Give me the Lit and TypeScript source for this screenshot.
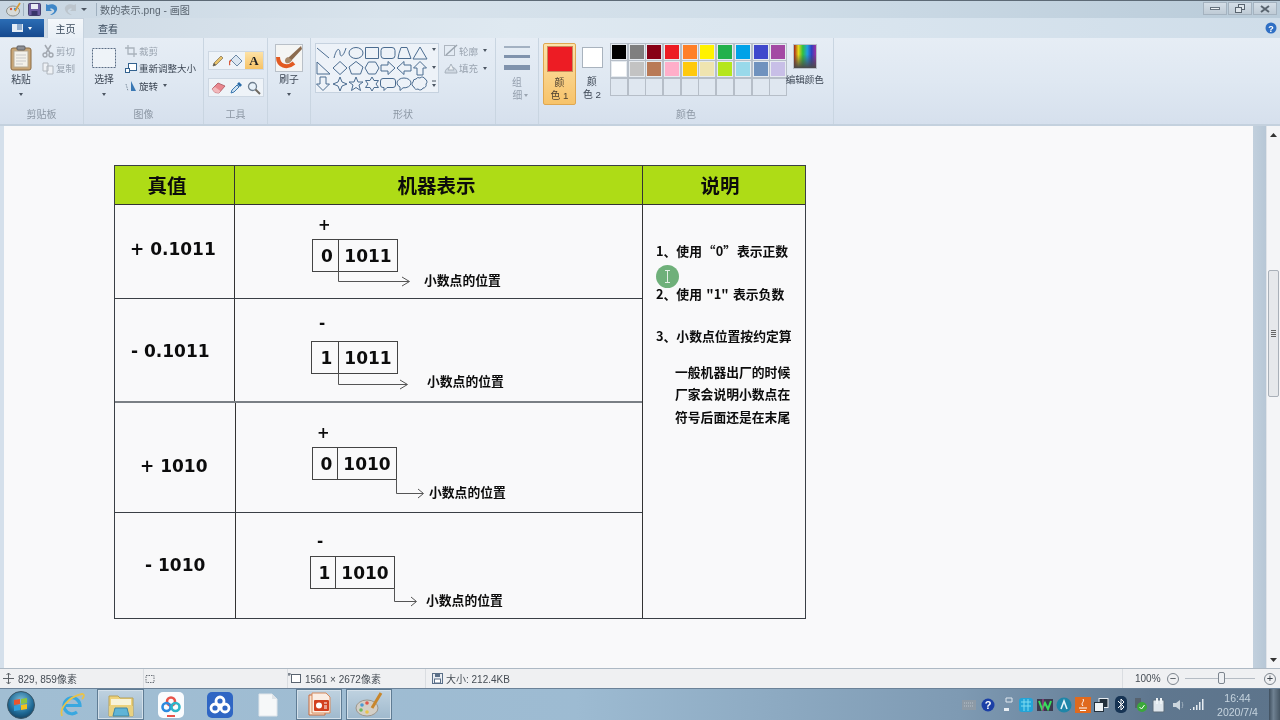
import { LitElement, html, css, svg } from "lit";
import { customElement } from "lit/decorators.js";

const SW1 = ["#000000","#7f7f7f","#880015","#ed1c24","#ff7f27","#fff200","#22b14c","#00a2e8","#3f48cc","#a349a4"];
const SW2 = ["#ffffff","#c3c3c3","#b97a57","#ffaec9","#ffc90e","#efe4b0","#b5e61d","#99d9ea","#7092be","#c8bfe7"];

const SHAPES = [
  ["M-6-5L6 5","M-6 5C-3-7 0-4 0 0S3 5 6-5","M-7 0a7 5.5 0 1 0 14 0a7 5.5 0 1 0-14 0Z","M-6.5-5.5h13v11h-13Z","M-4-5.5h8a3 3 0 0 1 3 3v5a3 3 0 0 1-3 3h-8a3 3 0 0 1-3-3v-5a3 3 0 0 1 3-3Z","M-3-5.5h6l4 11h-13l1-5Z","M0-6L7 6H-7Z"],
  ["M-6-6L7 6H-6Z","M0-6.5L7 0L0 6.5L-7 0Z","M0-6.5L7-1L4.5 6H-4.5L-7-1Z","M-3.5-6H3.5L7 0L3.5 6H-3.5L-7 0Z","M-7-3H0V-6.5L7 0L0 6.5V3H-7Z","M7-3H0V-6.5L-7 0L0 6.5V3H7Z","M-3 7V0H-6.5L0-6.5L6.5 0H3V7Z"],
  ["M-3-7V0H-6.5L0 6.5L6.5 0H3V-7Z","M0-7L2 -2L7 0L2 2L0 7L-2 2L-7 0L-2-2Z","M0-7L2-2H7L3 1L4.5 6.5L0 3.5L-4.5 6.5L-3 1L-7-2H-2Z","M0-7L2-3.5H6.5L4 0L6.5 3.5H2L0 7L-2 3.5H-6.5L-4 0L-6.5-3.5H-2Z","M-5-5.5H5a2.500 2.500 0 0 1 2.500 2.500V1a2.500 2.500 0 0 1-2.500 2.500H-1L-4 6.500V3.500H-5A2.500 2.500 0 0 1-7.500 1V-3A2.500 2.500 0 0 1-5-5.500Z","M-7-1a7 5 0 1 1 14 0a7 5 0 0 1-8 4.800L-4 6.500V3A7 5 0 0 1-7-1Z","M-4-5a3 3 0 0 1 4-1a3 3 0 0 1 5 1a3 3 0 0 1 1 5a3 3 0 0 1-3 4a3 3 0 0 1-5 1a3 3 0 0 1-4-2a3 3 0 0 1-1-5a3 3 0 0 1 3-3Z"],
];
const SX = [8,25,41,57,73,89,105];
const SY = [10,25,41];

const I = {
  clip: html`<svg width="22" height="26" viewBox="0 0 22 26"><rect x="1" y="3" width="20" height="22" rx="2" fill="#c9a676" stroke="#8a6a42"/><rect x="4" y="6" width="14" height="16" fill="#f3f1ea" stroke="#b7aa93"/><path d="M6 10h10M6 13h10M6 16h10M6 19h7" stroke="#c9c9c9"/><rect x="7" y="1" width="8" height="4" rx="1" fill="#8d8f94" stroke="#5e6066"/></svg>`,
  cut: html`<svg width="12" height="14" viewBox="0 0 12 14"><path d="M3 1l5 8M9 1L4 9" stroke="#a2a8b0" stroke-width="1.500"/><circle cx="3" cy="11" r="2" fill="none" stroke="#a2a8b0" stroke-width="1.400"/><circle cx="9" cy="11" r="2" fill="none" stroke="#a2a8b0" stroke-width="1.400"/></svg>`,
  copy: html`<svg width="12" height="14" viewBox="0 0 12 14"><path d="M1 2h5v8H1ZM5 5h6v8H5Z" fill="#eef1f5" stroke="#b0b6bd"/></svg>`,
  sel: html`<svg width="26" height="26" viewBox="0 0 26 26"><rect x="1.500" y="3.500" width="23" height="19" fill="#eef3f8" stroke="#5b6d85" stroke-dasharray="2 1"/></svg>`,
  crop: html`<svg width="12" height="12" viewBox="0 0 12 12"><path d="M3 0v9h9M0 3h9v9" fill="none" stroke="#a9b2bc" stroke-width="1.300"/></svg>`,
  resize: html`<svg width="12" height="12" viewBox="0 0 12 12"><rect x="3.500" y="1.500" width="8" height="7" fill="#fff" stroke="#33628f"/><rect x="0.500" y="6.500" width="4" height="4" fill="#fff" stroke="#33628f"/></svg>`,
  rotate: html`<svg width="12" height="12" viewBox="0 0 12 12"><path d="M6 1l5 10H6Z" fill="#3a78b4"/><path d="M1 4l2 7" stroke="#7c8c9c" stroke-dasharray="1.500 1"/></svg>`,
  pencil: html`<svg width="14" height="14" viewBox="0 0 14 14"><path d="M2 12l1-3 7-7 2 2-7 7Z" fill="#e8c26a" stroke="#8a7a5a" stroke-width=".8"/><path d="M2 12l1-3 2 2Z" fill="#555"/></svg>`,
  fill: html`<svg width="15" height="14" viewBox="0 0 15 14"><path d="M7 1l6 6-5 5-6-6Z" fill="#dbe6f1" stroke="#6b88a5"/><path d="M2 6c-2 2-2 4-1 5" fill="none" stroke="#d95a3c" stroke-width="1.500"/></svg>`,
  eraser: html`<svg width="15" height="13" viewBox="0 0 15 13"><path d="M1 8l6-6 7 3-6 7-4-.5Z" fill="#e9868e" stroke="#a8565e" stroke-width=".8"/><path d="M1 8l3 3.500 4 .5 1.500-2L4 6Z" fill="#f2b8bb"/></svg>`,
  dropper: html`<svg width="14" height="14" viewBox="0 0 14 14"><path d="M2 12l1-3 5-5 2 2-5 5Z" fill="#cfe2f2" stroke="#3c79b0"/><path d="M8 3l2-2 3 3-2 2Z" fill="#2a6ca8"/></svg>`,
  mag: html`<svg width="14" height="14" viewBox="0 0 14 14"><circle cx="5.500" cy="5.500" r="4" fill="#e8f2fa" stroke="#6f7f8f" stroke-width="1.300"/><path d="M8.500 8.500L13 13" stroke="#6f6a60" stroke-width="2"/></svg>`,
  brush: html`<svg width="28" height="28" viewBox="0 0 28 28"><rect x=".5" y=".5" width="27" height="27" fill="#f4f5f4" stroke="#b9c0c8"/><path d="M3 13c0 9 9 12 16 6" fill="none" stroke="#e25a22" stroke-width="4"/><path d="M26 2L13 14l3 3L27 5Z" fill="#8a6a4e"/><path d="M13 13c-3 1-4 4-2 6 3 1 5-1 6-3Z" fill="#a8896a"/></svg>`,
  outline: html`<svg width="14" height="13" viewBox="0 0 14 13"><rect x=".5" y="1.500" width="10" height="10" fill="none" stroke="#aeb6c0"/><path d="M2 11L13 1" stroke="#9aa4ae" stroke-width="1.500"/></svg>`,
  bucket: html`<svg width="14" height="13" viewBox="0 0 14 13"><path d="M1 11a6 6 0 0 1 12 0Z" fill="#cfd8e2" stroke="#a8b2bd"/><path d="M7 2l3 6H4Z" fill="#eef2f6" stroke="#a8b2bd"/></svg>`,
  orb: html`<svg width="28" height="28" viewBox="0 0 28 28"><defs><radialGradient id="o" cx=".5" cy=".35" r=".75"><stop offset="0" stop-color="#7fc0dc"/><stop offset=".6" stop-color="#1f6a96"/><stop offset="1" stop-color="#12344e"/></radialGradient></defs><circle cx="14" cy="14" r="13.500" fill="url(#o)" stroke="#3a5566"/><path d="M7 9l6-1v5l-6 1Z" fill="#e8552e"/><path d="M14 8l6-1v5l-6 1Z" fill="#8cc63f"/><path d="M7 15l6-1v5l-6 1Z" fill="#2f9fdc"/><path d="M14 14l6-1v5l-6 1Z" fill="#f4c21b"/></svg>`,
  ie: html`<svg width="28" height="28" viewBox="0 0 28 28"><path d="M7 14.500h15a8 8 0 1 0-3 6.500" fill="none" stroke="#39a8e0" stroke-width="3.200"/><path d="M4 25C1 18 10 6 24 3c3 0 2 3 0 5" fill="none" stroke="#e8c24a" stroke-width="1.800"/></svg>`,
  explorer: html`<svg width="28" height="26" viewBox="0 0 28 26"><path d="M2 4h9l2 2h13v18H2Z" fill="#eed27a" stroke="#b7a158"/><rect x="4" y="7" width="20" height="6" fill="#f8f3d8"/><rect x="2" y="14" width="24" height="10" fill="#e9d180"/><path d="M6 24l2-8h12l2 8Z" fill="#5fb4d6" stroke="#3d86a8"/></svg>`,
  cloudW: html`<svg width="26" height="26" viewBox="0 0 26 26"><rect width="26" height="26" rx="5" fill="#fafcfe"/><g fill="none" stroke-width="2.600"><circle cx="13" cy="9.500" r="4" stroke="#e8534a"/><circle cx="8.500" cy="15" r="4" stroke="#2d8ae0"/><circle cx="17.500" cy="15" r="4" stroke="#2db5c8"/></g><rect x="9" y="23" width="8" height="2" fill="#e8534a"/></svg>`,
  cloudB: html`<svg width="26" height="26" viewBox="0 0 26 26"><rect width="26" height="26" rx="5" fill="#2f66c4"/><g fill="none" stroke="#fff" stroke-width="2.800"><circle cx="13" cy="9" r="4"/><circle cx="8" cy="16" r="4"/><circle cx="18" cy="16" r="4"/></g></svg>`,
  doc: html`<svg width="20" height="24" viewBox="0 0 20 24"><path d="M1 1h13l5 5v17H1Z" fill="#f6f8f9" stroke="#dfe5ea"/><path d="M14 1v5h5" fill="#dfe4e8"/></svg>`,
  ppt: html`<svg width="26" height="26" viewBox="0 0 26 26"><path d="M3 3h16v20H3Z" fill="#f7e3d2" stroke="#c96a3c"/><path d="M6 1h14l4 4v16H6Z" fill="#fbeee4" stroke="#d88a5c"/><rect x="8" y="8" width="15" height="11" rx="1" fill="#d2401e"/><circle cx="13" cy="13.500" r="3" fill="#fff"/><path d="M18 11h3M18 14h3M18 16h3" stroke="#fff"/></svg>`,
  paint: html`<svg width="28" height="26" viewBox="0 0 28 26"><ellipse cx="12" cy="16" rx="11" ry="8" fill="#d3cfc7" stroke="#9c968c"/><circle cx="7" cy="13" r="1.800" fill="#4a9ad4"/><circle cx="12" cy="11" r="1.800" fill="#e0574a"/><circle cx="6" cy="18" r="1.800" fill="#6cba5a"/><circle cx="12" cy="20" r="1.800" fill="#e8c24a"/><path d="M26 1L17 16" stroke="#c8862c" stroke-width="3"/></svg>`,
  pal: html`<svg width="15" height="15" viewBox="0 0 15 15"><ellipse cx="7" cy="9" rx="6.500" ry="5" fill="#d8dbd9" stroke="#8d9290"/><circle cx="5" cy="7" r="1.200" fill="#d9523c"/><circle cx="9" cy="7" r="1.200" fill="#3f8fd0"/><path d="M14 1L9 9" stroke="#d79a36" stroke-width="1.600"/></svg>`,
  save: html`<svg width="13" height="13" viewBox="0 0 13 13"><rect x=".5" y=".5" width="12" height="12" rx="1" fill="#6a5aa0" stroke="#46406e"/><rect x="3" y="1" width="7" height="5" fill="#e8ecf4"/><rect x="3.500" y="8" width="6" height="4.500" fill="#38346a"/></svg>`,
  undo: html`<svg width="14" height="13" viewBox="0 0 14 13"><path d="M3 2c6-2 10 1 9 5-1 3-4 5-7 5 3-2 5-3 4-5-1-1-3-2-4-1l2 2H1V1Z" fill="#3f87c8"/></svg>`,
  redo: html`<svg width="14" height="13" viewBox="0 0 14 13"><path d="M11 2C5 0 1 3 2 7c1 3 4 5 7 5-3-2-5-3-4-5 1-1 3-2 4-1L7 8h6V1Z" fill="#bcc5cd"/></svg>`,
  plus: html`<svg width="11" height="11" viewBox="0 0 11 11"><path d="M5.500 0v11M0 5.500h11M3.500 2L5.500 0l2 2M3.500 9l2 2 2-2" fill="none" stroke="#5c6166"/></svg>`,
  selS: html`<svg width="12" height="12" viewBox="0 0 12 12"><path d="M2 2.500h8v7H2Z" fill="none" stroke="#6a7078" stroke-dasharray="1.500 1"/></svg>`,
  dim: html`<svg width="13" height="12" viewBox="0 0 13 12"><rect x="3.500" y="1.500" width="9" height="8" fill="#fff" stroke="#5a6470"/><path d="M1 0v3M0 1h3" stroke="#5a6470"/></svg>`,
  disk: html`<svg width="11" height="11" viewBox="0 0 11 11"><rect x=".5" y=".5" width="10" height="10" fill="#e8ecf2" stroke="#5a6f88"/><rect x="3" y="1" width="5" height="3" fill="#5a6f88"/><rect x="2.500" y="6" width="6" height="4" fill="#fff" stroke="#5a6f88"/></svg>`,
};

const T = {
  kb: html`<svg width="14" height="10"><rect width="14" height="10" fill="#8d9aa6"/><path d="M2 3h10M2 6h10" stroke="#b8c2cb" stroke-dasharray="1 1"/></svg>`,
  q: html`<svg width="14" height="14"><circle cx="7" cy="7" r="6.500" fill="#1b3fa6"/><text x="7" y="11" text-anchor="middle" font-size="11" font-weight="bold" font-family="Liberation Sans" fill="#fff">?</text></svg>`,
  flag: html`<svg width="12" height="16"><path d="M5 1h6v4H5Z" fill="none" stroke="#dfe7ee"/><path d="M3 11h5v3H3Z" fill="#e8eef3"/></svg>`,
  globe: html`<svg width="16" height="16"><rect x="1" y="1" width="14" height="14" rx="3" fill="#22a4d8"/><path d="M3 5h10M3 9h10M6 2v12M10 2v12" stroke="#7fdcf0"/></svg>`,
  w: html`<svg width="16" height="12"><rect width="16" height="12" fill="#3a3a4e"/><path d="M2 2l3 8 3-6 3 6 3-8" fill="none" stroke="#37e05a" stroke-width="2"/><path d="M6 0v12" stroke="#c23a9a"/></svg>`,
  a: html`<svg width="16" height="16"><circle cx="8" cy="8" r="7.500" fill="#1f86a8"/><path d="M5 12l3-8 3 8" fill="none" stroke="#e4f4fa" stroke-width="1.600"/></svg>`,
  java: html`<svg width="16" height="16"><rect width="16" height="16" fill="#e06a1e"/><path d="M8 2c2 3-3 4 0 7M4 11h8M5 13.500h6" stroke="#fff" fill="none"/></svg>`,
  win: html`<svg width="15" height="14"><rect x="5" y=".5" width="9" height="9" fill="#22303c" stroke="#e8eef3"/><rect x=".5" y="4.500" width="9" height="9" fill="#eef3f6" stroke="#22303c"/></svg>`,
  bt: html`<svg width="12" height="17"><rect width="12" height="17" rx="5" fill="#173454"/><path d="M3 5l6 6-3 3V3l3 3-6 6" fill="none" stroke="#fff"/></svg>`,
  ok: html`<svg width="16" height="16"><rect x="3" y="1" width="6" height="10" fill="#56626e"/><circle cx="10" cy="10" r="5" fill="#3aa83a"/><path d="M7.500 10l2 2 3-4" fill="none" stroke="#fff"/></svg>`,
  plug: html`<svg width="14" height="16"><rect x="1" y="3" width="11" height="12" rx="1" fill="#dfe6ec" stroke="#5c6c7a"/><path d="M5 1v6M9 1v6" stroke="#eef3f6" stroke-width="2"/></svg>`,
  vol: html`<svg width="14" height="14"><path d="M2 5h3l4-3v10L5 9H2Z" fill="#ccd6de"/><path d="M11 4c1 2 1 4 0 6" stroke="#9fb0be" fill="none"/></svg>`,
  net: html`<svg width="15" height="13"><path d="M1 11h1v1H1ZM4 9h1.500v3H4ZM7 7h1.500v5H7ZM10 4h1.500v8H10ZM13 1h1.500v11H13Z" fill="#e6ecf1"/></svg>`,
};
const TRAY = [T.kb,T.q,T.flag,T.globe,T.w,T.a,T.java,T.win,T.bt,T.ok,T.plug,T.vol,T.net];

const TASKS = [
  { ic: I.ie, w: 48, ml: 6, on: false },
  { ic: I.explorer, w: 47, ml: 1, on: true },
  { ic: I.cloudW, w: 48, ml: 3, on: false },
  { ic: I.cloudB, w: 48, ml: 1, on: false },
  { ic: I.doc, w: 48, ml: 0, on: false },
  { ic: I.ppt, w: 46, ml: 4, on: true },
  { ic: I.paint, w: 46, ml: 4, on: true },
];

interface Row { val: string; w: number; h: number; pl: number; pb: number; pt: number; sign: string; sx: number; sy: number; bx: number; by: number; b0: number; b1: number; bit: string; rest: string; arrow: string; ax: number; ay: number; aw: number; ah: number; nx: number; ny: number; line: string; }

const ROWS: Row[] = [
  { val: "+ 0.1011", w: 120, h: 94, pl: 15, pb: 6, pt: 0, sign: "+", sx: 83, sy: 20, bx: 77, by: 34, b0: 26, b1: 58, bit: "0", rest: "1011",
    arrow: "M.5 0V10.500H71M64 6L71.500 10.500L64 15", ax: 103, ay: 66, aw: 74, ah: 18, nx: 189, ny: 67, line: "thin" },
  { val: "- 0.1011", w: 120, h: 104, pl: 16, pb: 0, pt: 1, sign: "-", sx: 84, sy: 24, bx: 76, by: 42, b0: 27, b1: 58, bit: "1", rest: "1011",
    arrow: "M.5 0V11.500H69M62 7L69.500 11.500L62 16", ax: 103, ay: 74, aw: 74, ah: 18, nx: 192, ny: 74, line: "thick" },
  { val: "+ 1010", w: 121, h: 110, pl: 25, pb: 0, pt: 16, sign: "+", sx: 81, sy: 30, bx: 76, by: 44, b0: 25, b1: 58, bit: "0", rest: "1010",
    arrow: "M.5 0V14.500H27M22 10L27.500 14.500L22 19", ax: 160, ay: 76, aw: 30, ah: 22, nx: 193, ny: 81, line: "thin" },
  { val: "- 1010", w: 121, h: 0, pl: 30, pb: 2, pt: 0, sign: "-", sx: 81, sy: 28, bx: 74, by: 43, b0: 25, b1: 58, bit: "1", rest: "1010",
    arrow: "M.5 0V13.500H22M17 9L22.500 13.500L17 18", ax: 158, ay: 75, aw: 26, ah: 22, nx: 190, ny: 79, line: "none" },
];

@customElement("app-root")
export class AppRoot extends LitElement {
  static styles = css`
    :host { display: block; width: 1280px; height: 720px; overflow: hidden; font-family: "Liberation Sans", "Noto Sans CJK SC", sans-serif; font-size: 10px; color: #3c4654; }
    .app { width: 1280px; height: 720px; display: flex; flex-direction: column; filter: blur(0.35px); }
    svg { display: block; flex: none; }

    .title { height: 18px; flex: none; display: flex; align-items: center; box-sizing: border-box; border-top: 1px solid #5d6a76; padding-left: 6px; background: linear-gradient(90deg, #c8d6e2, #d8e3ec 30%, #cfdde8 60%, #b9cbd9); }
    .qsep { width: 1px; height: 13px; background: #9fb0bf; }
    .qa { display: flex; gap: 4px; align-items: center; }
    .ttl { color: #5a6570; font-size: 10.200px; margin-left: 3px; }
    .win { margin-left: auto; display: flex; gap: 1px; margin-right: 3px; align-self: flex-start; margin-top: 1px; }
    .wb { height: 13px; width: 24px; box-sizing: border-box; border: 1px solid #a4b2bf; background: linear-gradient(#d4dee7, #bfcbd6); display: flex; align-items: center; justify-content: center; }

    .tabs { height: 20px; flex: none; display: flex; align-items: flex-end; background: linear-gradient(90deg, #cdd9e4, #dfe9f1 40%, #d8e4ee 70%, #cfdde9); }
    .appbtn { width: 44px; height: 18px; background: linear-gradient(#2b6db5, #16498e); display: flex; align-items: center; justify-content: center; gap: 5px; margin-bottom: 1px; }
    .tab { height: 20px; display: flex; align-items: center; justify-content: center; font-size: 10px; color: #3a4a5c; }
    .tab.on { width: 37px; margin-left: 3px; background: linear-gradient(#f4f7fa, #e8eff6); border: 1px solid #c6d2de; border-bottom: 0; box-sizing: border-box; }
    .tab.off { width: 48px; }
    .help { margin-left: auto; margin-right: 3px; align-self: center; }

    .ribbon { height: 88px; flex: none; box-sizing: border-box; display: flex; background: linear-gradient(#e6edf5, #dfe8f2 50%, #d6e0ed); border-bottom: 2px solid #c4d1de; font-size: 9.800px; }
    .g { display: flex; flex-direction: column; box-sizing: border-box; border-right: 1px solid #c9d5e1; flex: none; }
    .gb { height: 68px; display: flex; flex: none; }
    .gl { text-align: center; color: #8c97a4; font-size: 10px; line-height: 18px; }
    .big { display: flex; flex-direction: column; align-items: center; padding-top: 7px; color: #3c4654; box-sizing: border-box; }
    .big .ic { height: 26px; display: flex; align-items: center; justify-content: center; margin-bottom: 2px; }
    .big .tx { line-height: 14px; }
    .dn { width: 0; height: 0; border: 2.500px solid transparent; border-top: 3px solid #4c5662; border-bottom: 0; }
    .dnw { height: 14px; display: flex; align-items: center; justify-content: center; }
    .smalls { display: flex; flex-direction: column; padding-top: 4px; }
    .sm { height: 17.500px; display: flex; align-items: center; gap: 2px; white-space: nowrap; font-size: 9.500px; }
    .sm .si { width: 12px; display: flex; justify-content: center; }
    .sm.dis { color: #9aa4b0; }
    .tools { display: flex; flex-direction: column; gap: 10px; padding: 14px 0 0 5px; }
    .trow { display: flex; height: 17px; width: 54px; background: #eef3f8; box-shadow: 0 0 0 1px #cdd7e2; }
    .tc { width: 18px; display: flex; align-items: center; justify-content: center; }
    .tc.on { background: linear-gradient(#fde2a6, #f6c265); font: bold 13px "Liberation Serif", serif; color: #222; }
    .gal { margin: 5px 0 0 4px; width: 124px; height: 50px; background: #edf2f8; box-sizing: border-box; border: 1px solid #c6d2df; }
    .lines { display: flex; flex-direction: column; align-items: center; width: 100%; padding-top: 8px; box-sizing: border-box; color: #939eac; }
    .l { width: 26px; background: #8093ad; margin-bottom: 7px; flex: none; }
    .l.a { height: 2px; background: #a3b1c2; }
    .l.b { height: 3px; }
    .l.c { height: 5px; margin-bottom: 6px; }
    .lines .tx { line-height: 13px; display: flex; align-items: center; gap: 2px; }
    .lines .tx.ar2 { margin-right: -7px; }
    .c1 { margin: 5px 0 0 4px; width: 33px; height: 62px; box-sizing: border-box; border: 1px solid #dfa751; border-radius: 2px; background: linear-gradient(#fde3aa, #f7c36a); display: flex; flex-direction: column; align-items: center; color: #4d4030; line-height: 13px; }
    .sq1 { width: 24px; height: 24px; background: #ed1c24; box-shadow: 0 0 0 1px #c78a5c; margin: 3px 0 5px; }
    .c2 { width: 32px; margin-top: 5px; display: flex; flex-direction: column; align-items: center; line-height: 13px; }
    .sq2 { width: 19px; height: 19px; background: #fff; box-shadow: 0 0 0 1px #a9b3be; margin: 5px 0 5px; }
    .pal { display: grid; grid-template-columns: repeat(10, 16px); grid-auto-rows: 16px; gap: 1.400px 1.700px; margin: 6px 0 0 3px; height: 52px; }
    .cell { box-shadow: inset 0 0 0 1px #e6ebf0, 0 0 0 1px #b6bec8; }
    .cell.e { background: #dfe7f0; box-shadow: 0 0 0 1px #b6bec8; }
    .edit { width: 39px; margin: 7px 0 0 -1px; display: flex; flex-direction: column; align-items: center; white-space: nowrap; font-size: 9.500px; }
    .rb { width: 22px; height: 23px; box-shadow: 0 0 0 1px #b8bfc8; background: linear-gradient(90deg, #a0201c, #e8d818, #30c040, #20a0e0, #3040c0, #a030a0); margin-bottom: 4px; position: relative; }
    .rb::after { content: ""; position: absolute; inset: 0; background: linear-gradient(transparent 40%, #4a4a4a); }

    .main { flex: 1; display: flex; min-height: 0; }
    .gut { width: 4px; background: #d5e0eb; }
    .canvas { flex: 1; background: #f9f9fa; padding: 39px 0 0 110px; box-sizing: border-box; }
    .strip { width: 13px; background: linear-gradient(90deg, #c2d0dd, #b7c7d6); }
    .sb { width: 14px; background: #f4f5f7; display: flex; flex-direction: column; align-items: center; box-sizing: border-box; border-left: 1px solid #e0e4e9; }
    .ar { height: 12px; display: flex; align-items: center; justify-content: center; flex: none; }
    .ar.u { margin-top: 3px; }
    .thumb { margin-top: 129px; width: 11px; height: 127px; box-sizing: border-box; border: 1px solid #a9b0b8; border-radius: 2px; background: #e6e8eb; display: flex; flex-direction: column; gap: 1px; align-items: center; justify-content: center; }
    .thumb i { width: 5px; height: 1px; background: #666; }
    .sp { flex: 1; }

    .table { width: 692px; height: 454px; box-sizing: border-box; border: 1px solid #3a3f45; display: flex; flex-direction: column; background: #f9f9fa; color: #0c0c0c; }
    .hd { height: 38px; flex: none; display: flex; background: #aedc16; border-bottom: 1px solid #333; font: bold 19.500px "Noto Sans CJK SC", sans-serif; }
    .hd > div { display: flex; align-items: center; justify-content: center; box-sizing: border-box; line-height: 1; }
    .h1 { width: 120px; border-right: 1px solid #333; padding-right: 15px; }
    .h2 { width: 408px; border-right: 1px solid #333; padding-right: 4px; }
    .h3 { flex: 1; padding-right: 8px; }
    .body { flex: 1; display: flex; min-height: 0; }
    .rows { width: 528px; display: flex; flex-direction: column; flex: none; border-right: 1px solid #333; box-sizing: border-box; }
    .row { display: flex; box-sizing: border-box; flex: none; }
    .row.last { flex: 1; }
    .row.thin { border-bottom: 1px solid #3a3f45; }
    .row.thick { border-bottom: 2px solid #7a7f84; }
    .val { box-sizing: border-box; display: flex; align-items: center; border-right: 1px solid #333; font: bold 17px "DejaVu Sans", sans-serif; white-space: pre; flex: none; }
    .dia { flex: 1; position: relative; }
    .mark { position: absolute; font: bold 15px "DejaVu Sans", sans-serif; line-height: 16px; }
    .reg { position: absolute; height: 33px; display: flex; box-sizing: border-box; border: 1px solid #444; font: bold 17px "DejaVu Sans", sans-serif; }
    .reg .bit { display: flex; align-items: center; justify-content: center; box-sizing: border-box; border-right: 1px solid #444; padding-left: 3px; }
    .reg .rest { display: flex; align-items: center; justify-content: center; box-sizing: border-box; }
    .arr { position: absolute; overflow: visible; }
    .note { position: absolute; font: bold 12.800px "Noto Sans CJK SC", sans-serif; line-height: 16px; white-space: nowrap; }
    .notes { flex: 1; position: relative; padding: 35px 0 0 13px; font: bold 12.800px/22px "Noto Sans CJK SC", sans-serif; white-space: nowrap; box-sizing: border-box; }
    .n1 { word-spacing: -2px; }
    .n2 { margin-top: 21px; word-spacing: 1.500px; }
    .n3 { margin-top: 20px; }
    .sub { margin: 14px 0 0 19px; line-height: 22.300px; }
    .cursor { position: absolute; left: 13px; top: 60px; width: 23px; height: 23px; border-radius: 50%; background: #6fb07a; display: flex; align-items: center; justify-content: center; }

    .status { height: 20px; flex: none; box-sizing: border-box; display: flex; align-items: center; background: #eff0f2; border-top: 1px solid #aeb9c4; color: #454c54; font-size: 10px; }
    .seg { display: flex; align-items: center; height: 100%; box-sizing: border-box; flex: none; gap: 4px; }
    .s1 { width: 144px; padding-left: 3px; border-right: 1px solid #dadde1; }
    .s2 { width: 144px; border-right: 1px solid #dadde1; }
    .s3 { width: 138px; border-right: 1px solid #dadde1; }
    .s4 { padding-left: 6px; gap: 3px; }
    .zoom { margin-left: auto; width: 158px; height: 100%; display: flex; align-items: center; border-left: 1px solid #dadde1; box-sizing: border-box; padding-left: 12px; }
    .track { width: 70px; height: 1px; background: #b5bcc4; position: relative; margin: 0 9px 0 6px; flex: none; }
    .knob { position: absolute; left: 33px; top: -6px; width: 7px; height: 12px; border: 1px solid #7d858e; border-radius: 2px; background: #eef0f3; box-sizing: border-box; }
    .zb { width: 12px; height: 12px; border-radius: 50%; border: 1px solid #7d858e; display: flex; align-items: center; justify-content: center; font-size: 11px; line-height: 1; color: #3c444c; box-sizing: border-box; flex: none; }
    .z100 { width: 32px; color: #454c54; flex: none; }

    .taskbar { height: 32px; flex: none; display: flex; align-items: center; background: linear-gradient(90deg, #a1bed3, #9dbbd2 45%, #7e9ab3 75%, #5f778f 90%, #5d748b); border-top: 1px solid #6b8299; box-sizing: border-box; }
    .orb { width: 42px; display: flex; justify-content: center; flex: none; }
    .task { height: 31px; box-sizing: border-box; display: flex; align-items: center; justify-content: center; flex: none; }
    .task.on { background: linear-gradient(#bfd2e0, #9fb9cd); border: 1px solid #5f7c94; box-shadow: inset 0 0 0 1px #d3e0ea; }
    .tray { margin-left: auto; display: flex; align-items: center; }
    .ti { width: 19px; display: flex; align-items: center; justify-content: center; flex: none; }
    .clock { width: 63px; text-align: center; color: #c6d4df; font-size: 10.500px; line-height: 14px; }
    .show { width: 11px; height: 31px; background: linear-gradient(90deg, #3f4f5e, #6f8192 40%, #465664); }
  `;

  private big(icon: unknown, text: unknown, w: number, arrow = true) {
    return html`<div class="big" style="width:${w}px"><div class="ic">${icon}</div><div class="tx">${text}</div>${arrow ? html`<div class="dnw"><div class="dn"></div></div>` : ""}</div>`;
  }

  private small(icon: unknown, text: string, dis = false, arrow = false) {
    return html`<div class="sm ${dis ? "dis" : ""}"><span class="si">${icon}</span><span>${text}</span>${arrow ? html`<div class="dn" style="margin-left:3px"></div>` : ""}</div>`;
  }

  private renderRibbon() {
    return html`<div class="ribbon">
      <div class="g" style="width:84px"><div class="gb" style="padding-left:8px;gap:8px">${this.big(I.clip, "粘贴", 26)}
        <div class="smalls">${this.small(I.cut, "剪切", true)}${this.small(I.copy, "复制", true)}</div></div><div class="gl">剪贴板</div></div>
      <div class="g" style="width:120px"><div class="gb" style="padding-left:7px;gap:8px">${this.big(I.sel, "选择", 26)}
        <div class="smalls">${this.small(I.crop, "裁剪", true)}${this.small(I.resize, "重新调整大小")}${this.small(I.rotate, "旋转", false, true)}</div></div><div class="gl">图像</div></div>
      <div class="g" style="width:64px"><div class="gb"><div class="tools">
        <div class="trow"><div class="tc">${I.pencil}</div><div class="tc">${I.fill}</div><div class="tc on">A</div></div>
        <div class="trow"><div class="tc">${I.eraser}</div><div class="tc">${I.dropper}</div><div class="tc">${I.mag}</div></div>
      </div></div><div class="gl">工具</div></div>
      <div class="g" style="width:43px"><div class="gb">${this.big(I.brush, "刷子", 42)}</div><div class="gl"></div></div>
      <div class="g" style="width:185px"><div class="gb">
        <div class="gal"><svg width="122" height="48" viewBox="1 1 122 48">
          ${SHAPES.map((r, j) => r.map((d, i) => svg`<path transform="translate(${SX[i]} ${SY[j]})" d=${d} fill="none" stroke="#4b6c90"/>`))}
          <path d="M117 5h4l-2 3ZM117 23h4l-2 3ZM117 41h4l-2 3Z" fill="#4c5662" stroke="none"/><path d="M117 38h4" stroke="#4c5662"/>
        </svg></div>
        <div class="smalls" style="margin-left:6px">
          ${this.small(I.outline, "轮廓", true, true)}${this.small(I.bucket, "填充", true, true)}
        </div></div><div class="gl">形状</div></div>
      <div class="g" style="width:43px"><div class="gb"><div class="lines"><div class="l a"></div><div class="l b"></div><div class="l c"></div><div class="tx">组</div><div class="tx ar2">细<div class="dn" style="border-top-color:#9aa4b0"></div></div></div></div><div class="gl"></div></div>
      <div class="g" style="width:295px"><div class="gb">
        <div class="c1"><div class="sq1"></div><div>颜</div><div>色 1</div></div>
        <div class="c2"><div class="sq2"></div><div style="margin-top:3px">颜</div><div>色 2</div></div>
        <div class="pal">
          ${SW1.map(c => html`<div class="cell" style="background:${c}"></div>`)}
          ${SW2.map(c => html`<div class="cell" style="background:${c}"></div>`)}
          ${SW1.map(() => html`<div class="cell e"></div>`)}
        </div>
        <div class="edit"><div class="rb"></div><div>编辑颜色</div></div>
      </div><div class="gl">颜色</div></div>
    </div>`;
  }

  private renderTable() {
    return html`<div class="table">
      <div class="hd"><div class="h1">真值</div><div class="h2">机器表示</div><div class="h3">说明</div></div>
      <div class="body">
        <div class="rows">
          ${ROWS.map(r => html`<div class="row ${r.line} ${r.h ? "" : "last"}" style=${r.h ? `height:${r.h}px` : ""}>
            <div class="val" style="width:${r.w}px;padding-left:${r.pl}px;padding-bottom:${r.pb}px;padding-top:${r.pt}px">${r.val}</div>
            <div class="dia">
              <div class="mark" style="left:${r.sx}px;top:${r.sy - 8}px">${r.sign}</div>
              <div class="reg" style="left:${r.bx}px;top:${r.by}px">
                <div class="bit" style="width:${r.b0}px">${r.bit}</div><div class="rest" style="width:${r.b1}px">${r.rest}</div>
              </div>
              <svg class="arr" style="left:${r.ax}px;top:${r.ay}px" width=${r.aw} height=${r.ah} fill="none" stroke="#555"><path d=${r.arrow}/></svg>
              <div class="note" style="left:${r.nx}px;top:${r.ny}px">小数点的位置</div>
            </div>
          </div>`)}
        </div>
        <div class="notes">
          <div class="n1">1、使用 “0” 表示正数</div>
          <div class="n2">2、使用 "1" 表示负数</div>
          <div class="n3">3、小数点位置按约定算</div>
          <div class="sub">一般机器出厂的时候<br/>厂家会说明小数点在<br/>符号后面还是在末尾</div>
          <div class="cursor"><svg width="7" height="13" fill="none" stroke="#e4efe6"><path d="M1 .5h5M1 12.500h5M3.500 .5v12"/></svg></div>
        </div>
      </div>
    </div>`;
  }

  render() {
    return html`<div class="app">
      <div class="title">
        <div class="qa">${I.pal}</div><div class="qsep" style="margin-left:2px"></div>
        <div class="qa" style="margin-left:4px">${I.save}${I.undo}${I.redo}<div class="dn" style="border-width:3px;border-bottom:0"></div></div>
        <div class="qsep" style="margin-left:9px"></div>
        <div class="ttl">数的表示.png - 画图</div>
        <div class="win">
          <div class="wb"><svg width="10" height="5"><rect x=".5" y="1.500" width="9" height="2" fill="#eef2f5" stroke="#66727e"/></svg></div>
          <div class="wb"><svg width="10" height="9" fill="#dfe6ec" stroke="#59646f"><rect x="3.500" y=".5" width="6" height="5"/><rect x=".5" y="3.500" width="6" height="5"/></svg></div>
          <div class="wb"><svg width="10" height="8" stroke="#59646f" stroke-width="2"><path d="M1 1l8 6M9 1L1 7"/></svg></div>
        </div>
      </div>
      <div class="tabs">
        <div class="appbtn"><svg width="11" height="8"><rect width="11" height="8" fill="#e4edf6"/><path d="M5 1h5M5 3h5M5 5h5" stroke="#3d6fa8"/></svg><div class="dn" style="border-top-color:#fff"></div></div>
        <div class="tab on">主页</div><div class="tab off">查看</div>
        <div class="help"><svg width="12" height="12"><circle cx="6" cy="6" r="5.500" fill="#2f6fc4"/><text x="6" y="9.500" text-anchor="middle" font-size="9" font-weight="bold" font-family="Liberation Sans" fill="#fff">?</text></svg></div>
      </div>
      ${this.renderRibbon()}
      <div class="main">
        <div class="gut"></div>
        <div class="canvas">${this.renderTable()}</div>
        <div class="strip"></div>
        <div class="sb">
          <div class="ar u"><svg width="7" height="4"><path d="M3.500 0L7 4H0Z" fill="#333"/></svg></div>
          <div class="thumb"><i></i><i></i><i></i><i></i></div>
          <div class="sp"></div>
          <div class="ar" style="margin-bottom:2px"><svg width="7" height="4"><path d="M3.500 4L7 0H0Z" fill="#333"/></svg></div>
        </div>
      </div>
      <div class="status">
        <div class="seg s1">${I.plus}<span>829, 859像素</span></div>
        <div class="seg s2">${I.selS}</div>
        <div class="seg s3">${I.dim}<span>1561 × 2672像素</span></div>
        <div class="seg s4">${I.disk}<span>大小: 212.4KB</span></div>
        <div class="zoom"><span class="z100">100%</span><div class="zb">−</div><div class="track"><div class="knob"></div></div><div class="zb">+</div></div>
      </div>
      <div class="taskbar">
        <div class="orb">${I.orb}</div>
        ${TASKS.map(t => html`<div class="task ${t.on ? "on" : ""}" style="width:${t.w}px;margin-left:${t.ml}px">${t.ic}</div>`)}
        <div class="tray">
          ${TRAY.map(t => html`<div class="ti">${t}</div>`)}
          <div class="clock">16:44<br/>2020/7/4</div>
          <div class="show"></div>
        </div>
      </div>
    </div>`;
  }
}
